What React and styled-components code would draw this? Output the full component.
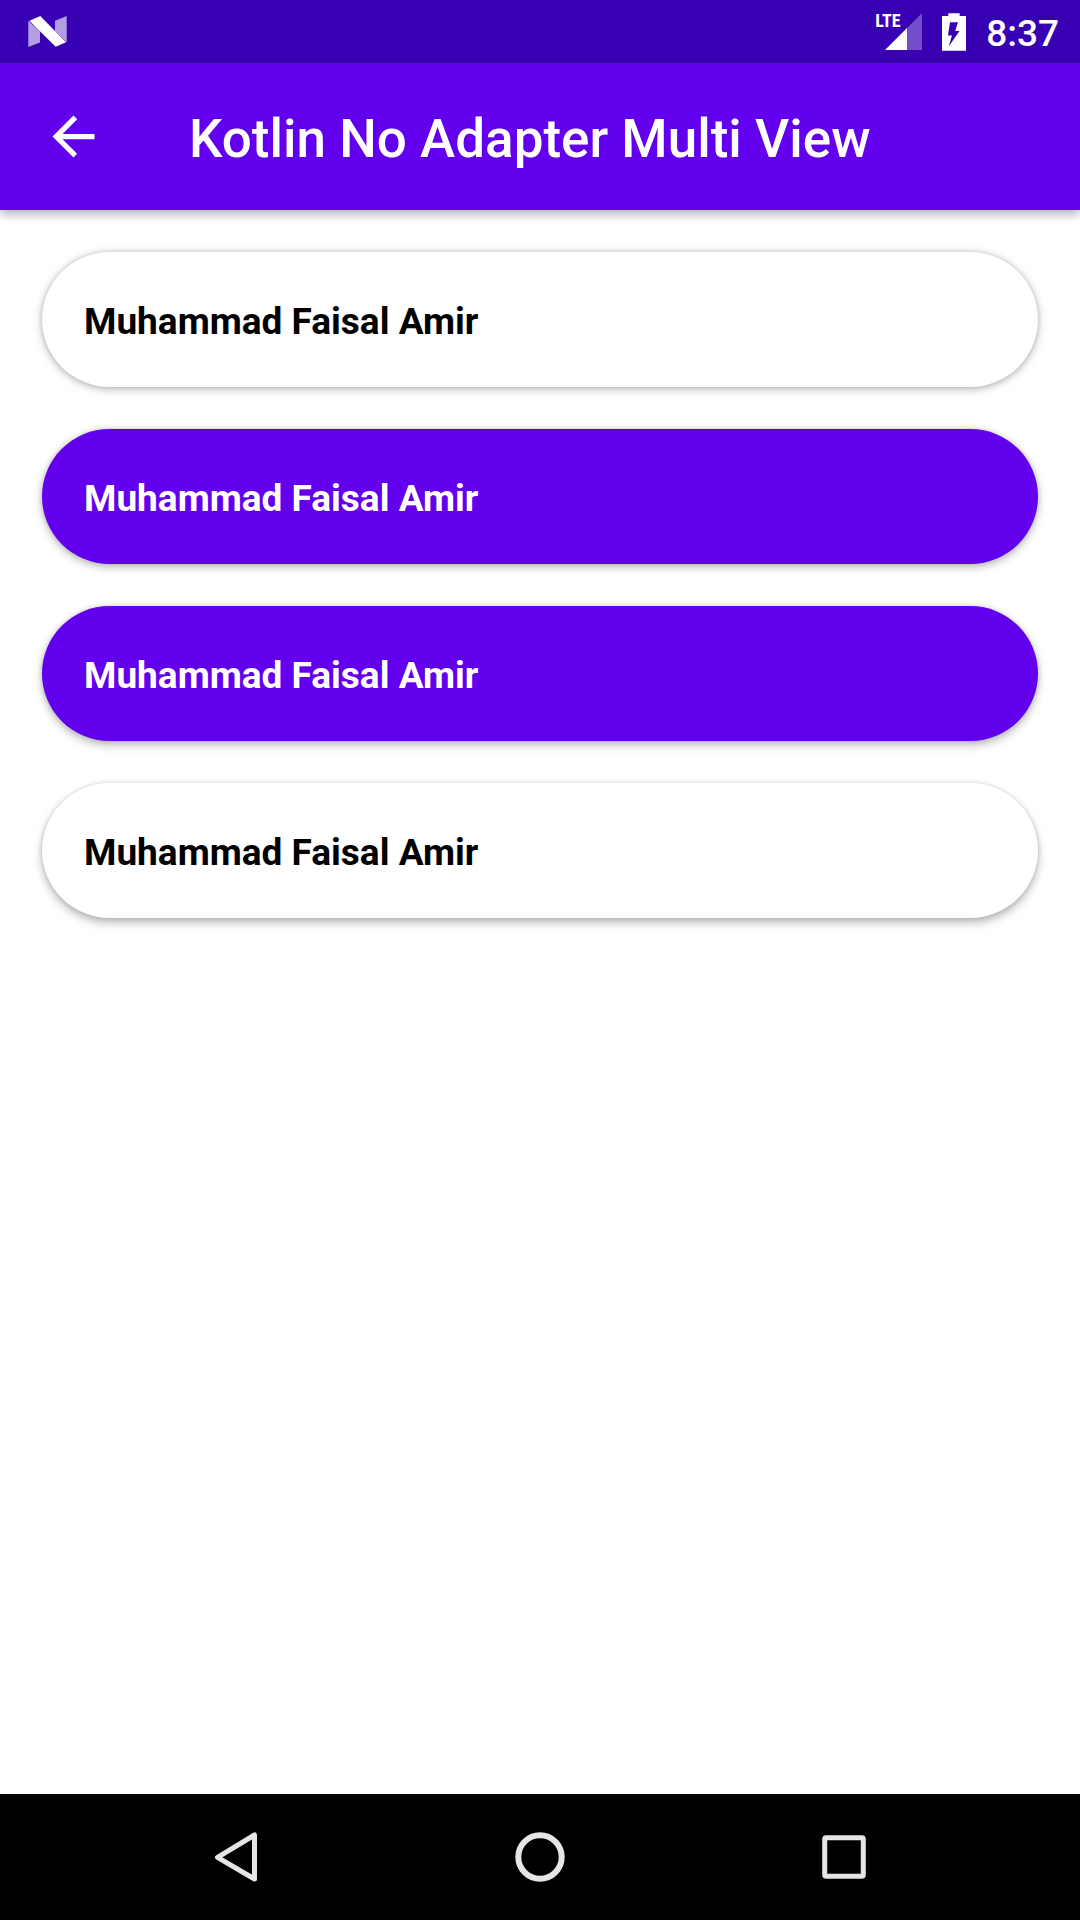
import React from "react";
import styled, { createGlobalStyle } from "styled-components";

const GlobalStyle = createGlobalStyle`
  *, *::before, *::after { box-sizing: border-box; }
  body {
    margin: 0;
    background: #ffffff;
    font-family: Roboto, "Noto Sans", sans-serif;
  }
`;

const Screen = styled.div`
  display: flex;
  flex-direction: column;
  min-height: 100vh;
`;

const StatusBar = styled.div`
  display: flex;
  align-items: center;
  justify-content: space-between;
  height: 63px;
  padding: 0 21px 0 28px;
  background: #3700b3;
  color: #ffffff;
`;

const StatusIcons = styled.div`
  display: flex;
  align-items: center;
  gap: 20px;
`;

const Signal = styled.div`
  position: relative;
  display: flex;
`;

const NetworkType = styled.span`
  position: absolute;
  top: -2px;
  left: -10px;
  font-family: "Liberation Sans Narrow", "Roboto Condensed", Roboto, sans-serif;
  font-size: 18px;
  font-weight: 700;
  line-height: 20px;
`;

const Clock = styled.time`
  font-size: 37px;
  font-weight: 500;
  line-height: 42px;
  padding-top: 4px;
`;

const Toolbar = styled.header`
  position: relative;
  display: flex;
  align-items: center;
  gap: 42px;
  height: 147px;
  background: #6200ee;
  color: #ffffff;
  box-shadow: 0 4px 10px rgba(0, 0, 0, 0.32);
`;

const IconButton = styled.button`
  display: flex;
  align-items: center;
  justify-content: center;
  width: ${(p) => p.$width || "auto"};
  height: 100%;
  padding: 0;
  border: 0;
  background: transparent;
  color: inherit;
  cursor: pointer;
`;

const Title = styled.h1`
  margin: 0;
  padding-top: 4px;
  font-size: 53px;
  font-weight: 500;
  line-height: 62px;
`;

const List = styled.ul`
  display: flex;
  flex: 1;
  flex-direction: column;
  gap: 42px;
  margin: 0;
  padding: 42px;
  list-style: none;
`;

const Card = styled.li`
  padding: 44px 42px 40px;
  border-radius: 68px;
  background: ${(p) => (p.$filled ? "#6200ee" : "#ffffff")};
  color: ${(p) => (p.$filled ? "#ffffff" : "#000000")};
  font-size: 37px;
  font-weight: 700;
  line-height: 51px;
  box-shadow:
    0 ${(p) => p.$depth}px 10px rgba(0, 0, 0, 0.26),
    0 0 5px rgba(0, 0, 0, 0.14);
`;

const NavBar = styled.nav`
  display: grid;
  grid-template-columns: repeat(3, 1fr);
  height: 126px;
  padding: 0 84px;
  background: #000000;
  color: #e6e6e6;
`;

const people = [
  { id: 1, name: "Muhammad Faisal Amir", filled: false },
  { id: 2, name: "Muhammad Faisal Amir", filled: true },
  { id: 3, name: "Muhammad Faisal Amir", filled: true },
  { id: 4, name: "Muhammad Faisal Amir", filled: false },
];

const NougatIcon = () => (
  <svg width="39" height="31" viewBox="0 0 39 31" fill="#fff" aria-hidden="true">
    <path fillOpacity=".62" d="M.3 4.7L12 15.5v11L.3 31zM27 4.7L38.7 0v26.5L27 15z" />
    <path d="M1.3 4.7L12.3 0 38 26.3 27.7 30.7z" />
  </svg>
);

const SignalIcon = () => (
  <svg width="37" height="37" viewBox="0 0 37 37" fill="#fff" aria-hidden="true">
    <path fillOpacity=".3" d="M37 0v37H22V15z" />
    <path d="M22 15v22H0z" />
  </svg>
);

const BatteryIcon = () => (
  <svg width="24" height="38" viewBox="0 0 24 38" fill="#fff" aria-hidden="true">
    <path
      fillRule="evenodd"
      d="M6.3.3h11.4V3H24v34.7H0V3h6.3zM8 9.3L6 22.5h4L6.7 33.5 17.5 18h-4.3L16 9.3z"
    />
  </svg>
);

const ArrowIcon = () => (
  <svg width="63" height="63" viewBox="0 0 24 24" fill="currentColor" aria-hidden="true">
    <path d="M20 11H7.83l5.59-5.59L12 4l-8 8 8 8 1.41-1.41L7.83 13H20v-2z" />
  </svg>
);

const BackIcon = () => (
  <svg width="50" height="50" viewBox="0 0 50 50" fill="none" stroke="currentColor" strokeWidth="5" strokeLinejoin="round" aria-hidden="true">
    <path d="M43.5 3v44L6.5 25.3z" />
  </svg>
);

const HomeIcon = () => (
  <svg width="50" height="50" viewBox="0 0 50 50" fill="none" stroke="currentColor" strokeWidth="6" aria-hidden="true">
    <circle cx="25" cy="25" r="21.7" />
  </svg>
);

const RecentIcon = () => (
  <svg width="50" height="50" viewBox="0 0 50 50" fill="none" stroke="currentColor" strokeWidth="5" aria-hidden="true">
    <rect x="5.7" y="5.7" width="38.6" height="38.6" rx="1.5" />
  </svg>
);

export default function App() {
  return (
    <>
      <GlobalStyle />
      <Screen>
        <StatusBar>
          <NougatIcon />
          <StatusIcons>
            <Signal>
              <SignalIcon />
              <NetworkType>LTE</NetworkType>
            </Signal>
            <BatteryIcon />
            <Clock>8:37</Clock>
          </StatusIcons>
        </StatusBar>
        <Toolbar>
          <IconButton type="button" aria-label="Navigate up" $width="147px">
            <ArrowIcon />
          </IconButton>
          <Title>Kotlin No Adapter Multi View</Title>
        </Toolbar>
        <List>
          {people.map((person, index) => (
            <Card key={person.id} $filled={person.filled} $depth={index + 2}>
              {person.name}
            </Card>
          ))}
        </List>
        <NavBar aria-label="System">
          <IconButton type="button" aria-label="Back">
            <BackIcon />
          </IconButton>
          <IconButton type="button" aria-label="Home">
            <HomeIcon />
          </IconButton>
          <IconButton type="button" aria-label="Recent apps">
            <RecentIcon />
          </IconButton>
        </NavBar>
      </Screen>
    </>
  );
}
